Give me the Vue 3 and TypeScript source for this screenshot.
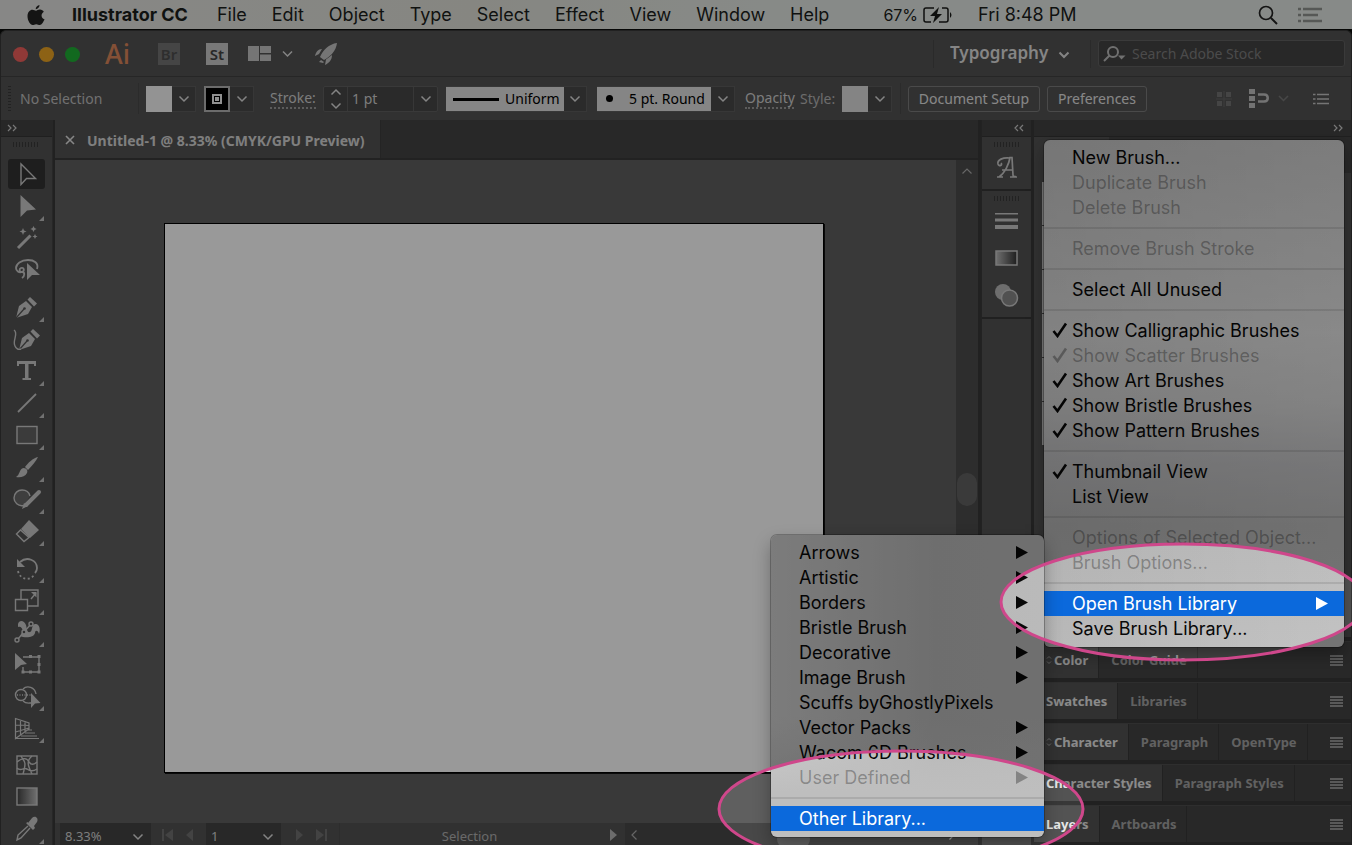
<script setup lang="ts">
import { ref } from 'vue'

interface MenuEntry {
  label?: string
  checked?: boolean
  disabled?: boolean
  arrow?: boolean
  active?: boolean
}

interface Tool {
  name: string
  svg: string
  flyout?: boolean
}

const appMenus = ['File', 'Edit', 'Object', 'Type', 'Select', 'Effect', 'View', 'Window', 'Help']

const brushMenu: MenuEntry[] = [
  { label: 'New Brush...' },
  { label: 'Duplicate Brush', disabled: true },
  { label: 'Delete Brush', disabled: true },
  {},
  { label: 'Remove Brush Stroke', disabled: true },
  {},
  { label: 'Select All Unused' },
  {},
  { label: 'Show Calligraphic Brushes', checked: true },
  { label: 'Show Scatter Brushes', checked: true, disabled: true },
  { label: 'Show Art Brushes', checked: true },
  { label: 'Show Bristle Brushes', checked: true },
  { label: 'Show Pattern Brushes', checked: true },
  {},
  { label: 'Thumbnail View', checked: true },
  { label: 'List View' },
  {},
  { label: 'Options of Selected Object...', disabled: true },
  { label: 'Brush Options...', disabled: true },
  {},
  { label: 'Open Brush Library', arrow: true, active: true },
  { label: 'Save Brush Library...' },
]

const libraryMenu: MenuEntry[] = [
  { label: 'Arrows', arrow: true },
  { label: 'Artistic', arrow: true },
  { label: 'Borders', arrow: true },
  { label: 'Bristle Brush', arrow: true },
  { label: 'Decorative', arrow: true },
  { label: 'Image Brush', arrow: true },
  { label: 'Scuffs byGhostlyPixels' },
  { label: 'Vector Packs', arrow: true },
  { label: 'Wacom 6D Brushes', arrow: true },
  { label: 'User Defined', arrow: true, disabled: true },
  {},
  { label: 'Other Library...', active: true },
]

const panels: { tabs: string[]; cycle?: boolean }[] = [
  { tabs: ['Color', 'Color Guide'], cycle: true },
  { tabs: ['Swatches', 'Libraries'] },
  { tabs: ['Character', 'Paragraph', 'OpenType'], cycle: true },
  { tabs: ['Character Styles', 'Paragraph Styles'] },
  { tabs: ['Layers', 'Artboards'] },
]

const nib = '<path class="f" d="M4 26 7 14 14 9 20 15 16 22ZM15.500 7.500 18 5 25 11.500 22 14.500Z"/><path class="cut" d="M4 26 12 17"/><circle class="bgf" cx="12.500" cy="16.500" r="1.300"/>'

const toolGroups: Tool[][] = [
  [
    { name: 'Selection', svg: '<path class="s" d="M9 5V25.500L14.500 19.500H23.500Z"/>' },
    { name: 'Direct Selection', flyout: true, svg: '<path class="f" d="M8.500 4V26L15 19.500 24 18.500Z"/>' },
    { name: 'Magic Wand', svg: '<path class="s w3" d="M6 25 18.500 12.500"/><path class="f" d="M11 5l1 2.500 2.500 1-2.500 1-1 2.500-1-2.500-2.500-1 2.500-1ZM21.500 3l1 2 2 1-2 1-1 2-1-2-2-1 2-1ZM23 11l.8 1.700 1.700.8-1.700.8-.8 1.700-.8-1.700-1.700-.8 1.700-.8Z"/>' },
    { name: 'Lasso', svg: '<path class="s w2" d="M25 14C27 8 22 5 16 5 9 5 4 9 4 13c0 3 3 5 6 4 3-1 2-5-1-4-2 1-2 4 1 4 3 0 3 4 0 6"/><path class="f" d="M15 8V25L20 20 28 20Z"/>' },
  ],
  [
    { name: 'Pen', flyout: true, svg: nib },
    { name: 'Curvature', svg: '<g transform="translate(3 0)">' + nib + '</g><path class="s" d="M2 6C7 9 0 17 3 22 4 25 7 26 9 25"/>' },
    { name: 'Type', flyout: true, svg: '<path class="f" d="M5 5H24V10H22V8H16.500V22H19V24H10.500V22H13V8H7V10H5Z"/>' },
    { name: 'Line Segment', flyout: true, svg: '<path class="s w2" d="M6 24 24 6"/>' },
    { name: 'Rectangle', flyout: true, svg: '<rect class="s" x="5" y="6.500" width="20" height="17" fill-opacity=".3" style="fill:#888"/>' },
    { name: 'Paintbrush', flyout: true, svg: '<path class="f" d="M26 5C21 6 16 11 13 15L16 18C20 14 24 9 26 5ZM11.500 16C15 16 16 19 15 21 13 25 8 26 4 25 8 23 7 17 11.500 16Z"/>' },
    { name: 'Shaper', flyout: true, svg: '<path class="s" d="M12 21.500C6 23 2 18 2 14 2 9 6 6 10 6 14 6 17 8 18 12" style="fill:#686868"/><path class="s w4" d="M14 21 27 8"/><path class="f" d="M10 25 12 19 16 22Z"/>' },
    { name: 'Eraser', flyout: true, svg: '<path class="f" d="M17 4 27 14 18 22 9 13Z"/><path class="s" d="M8.500 14 4.500 18 12 25.500 17 21.500Z"/>' },
  ],
  [
    { name: 'Rotate', flyout: true, svg: '<path class="s w2" d="M8 9C15 3 25 7 25 15 25 17 24 19 23 20"/><path class="f" d="M5 6V14H13Z"/><path class="s w2" stroke-dasharray="2 2.500" d="M6 18C8 27 18 28 22 22"/>' },
    { name: 'Scale', flyout: true, svg: '<path class="s" d="M9 14V5H26V21H16M3.500 14.500H15.500V25.500H3.500ZM19 14 24 8"/><path class="f" d="M19 7H24.500V12.500Z"/>' },
    { name: 'Width', flyout: true, svg: '<path class="f" d="M6 7C7 3 12 3 14 8 15 12 15 16 18 15 21 14 19 8 23 7 27 6 29 12 27 17 26 13 23 13 23 16 22 20 16 21 11 20L8 19 11 14C10 11 9 9 6 10Z"/><path class="s" d="M6 22 19 7"/><circle class="s bg" cx="5" cy="23" r="2"/><circle class="s bg" cx="12" cy="15" r="2"/><circle class="s bg" cx="19" cy="7" r="2"/>' },
    { name: 'Free Transform', svg: '<path class="f" d="M3 4V21L9 16 15 15Z"/><path class="s" d="M11 8H27V23H11V18"/><path class="f" d="M17 6h3v3h-3ZM25.500 6h3v3h-3ZM25.500 14h3v3h-3ZM25.500 21.500h3v3h-3ZM17 21.500h3v3h-3ZM9.500 21.500h3v3h-3Z"/>' },
    { name: 'Shape Builder', flyout: true, svg: '<circle class="s" cx="9" cy="14" r="5.500"/><path class="s" d="M11 8C15 4 23 6 24 13M11 20C14 23 17 22 19 22"/><path class="s" stroke-dasharray="1 1.500" d="M5 14H20"/><path class="f" d="M19 12V27L23 22.500 28.500 22Z"/>' },
    { name: 'Perspective Grid', flyout: true, svg: '<path class="s w1" d="M3.500 5.500V25.500L17 16V10ZM3.500 12 17 12.500M3.500 19 17 15M8.500 7V21.500M13 8V18.500M16 17H20M13 20H23M9 23H25M4 25.500H27"/>' },
  ],
  [
    { name: 'Mesh', svg: '<rect class="s" x="5" y="6" width="20" height="18"/><path class="s" d="M5 12C11 7 15 8 17 12 19 15 22 15 25 12M5 18C9 22 11 17 15 19 19 22 22 21 25 19M9 6C12 12 15 10 11 24M20 6C14 11 16 16 20 24"/>' },
    { name: 'Gradient', svg: '<rect class="s" x="5" y="6" width="20" height="17" style="fill:url(#tool-grad)"/>' },
    { name: 'Eyedropper', flyout: true, svg: '<path class="f" d="M16 9 20 4C23 1 27 4 25 8L22 12 23 14 21 16 14 9 16 8Z"/><path class="s" d="M16 12 6 21 5 26 9 24 18 14"/>' },
  ],
]

const strokeWeight = ref('1 pt')
const search = ref('')
const selectedTool = ref('Selection')
</script>

<template>
  <div class="screen">
    <header class="mac-bar">
      <svg class="apple" viewBox="0 0 18 22" aria-label="Apple"><path d="M12.500 1C12.600 3 10.800 5.300 8.700 5.200 8.500 3.200 10.500 1.200 12.500 1ZM9 6.700C10 6.700 11 5.500 13 5.600 14.700 5.700 16 6.500 16.800 7.700 13.500 9.800 14 14 17.500 15.300 16.700 17.600 14.800 21 12.800 21 11.500 21 10.800 20.200 9.200 20.200 7.600 20.200 6.900 21 5.700 21 3.200 21 .5 16.500.5 12.300.5 8 3 5.700 5.400 5.700 7 5.700 8 6.700 9 6.700Z" /></svg>
      <nav class="mac-menus" aria-label="Application menu">
        <button class="mac-item app-name" type="button">Illustrator CC</button>
        <button v-for="m in appMenus" :key="m" class="mac-item" type="button">{{ m }}</button>
      </nav>
      <div class="mac-status">
        <span class="battery-text">67%</span>
        <svg class="battery" viewBox="0 0 32 18"><path d="M12 2H4Q2 2 2 4V14Q2 16 4 16H9M20 2H24Q26 2 26 4V14Q26 16 24 16H17" fill="none" stroke="#181a18" stroke-width="1.500" /><path d="M17 1 8 10H13L11 17 20 8H15ZM28 6Q31 9 28 12Z" fill="#181a18" /></svg>
        <span class="clock">Fri 8:48 PM</span>
      </div>
      <button class="bare spot" type="button" aria-label="Spotlight"><svg viewBox="0 0 20 20"><circle cx="8" cy="8" r="6.500" fill="none" stroke="#222" stroke-width="1.700" /><path d="M13 13 19 19" stroke="#222" stroke-width="2" /></svg></button>
      <button class="bare notif" type="button" aria-label="Notifications"><svg viewBox="0 0 24 16"><path d="M0 2H3M0 8H3M0 14H3M5 2H24M5 8H20M5 14H24" stroke="#8f938f" stroke-width="2.400" /></svg></button>
    </header>

    <div class="window">
      <div class="title-bar">
        <div class="lights"><i class="red"></i><i class="yellow"></i><i class="green"></i></div>
        <span class="ai">Ai</span>
        <button class="badge br" type="button">Br</button>
        <button class="badge st" type="button">St</button>
        <button class="bare arrange" type="button" aria-label="Arrange documents"><svg viewBox="0 0 46 16"><path d="M0 0H11V15H0ZM12 0H23V7H12ZM12 8.500H23V15H12Z" fill="#c4c4c4" /><path d="M35 5.500 39.500 10 44 5.500" fill="none" stroke="#ddd" stroke-width="1.500" /></svg></button>
        <button class="bare rocket" type="button" aria-label="GPU performance"><svg viewBox="0 0 24 24"><path d="M23 1C15 2 9 8 6 15L10 18C17 14 22 9 23 1ZM8 7C4 7 2 10 1 14L5 12ZM18 13 12 17.500 11 23C15 21 18 18 18 13ZM7 18 10 20 9 21 5 20Z" fill="#c4c4c4" /></svg></button>
        <span class="spacer"></span>
        <div class="workspace">
          <select aria-label="Workspace"><option>Typography</option></select>
          <svg class="chev" viewBox="0 0 12 8"><path d="M1.500 1.500 6 6 10.500 1.500" /></svg>
        </div>
        <label class="search">
          <svg viewBox="0 0 24 18"><circle cx="11" cy="7" r="5" fill="none" stroke="#bbb" stroke-width="2" /><path d="M7.500 10.500 2 16" stroke="#bbb" stroke-width="2" /><path d="M16 10.500H23.500L19.500 14.500Z" fill="#bbb" /></svg>
          <input v-model="search" type="search" placeholder="Search Adobe Stock" aria-label="Search Adobe Stock" />
        </label>
      </div>

      <div class="control-bar">
        <i class="grip-v"></i>
        <span class="no-sel">No Selection</span>
        <i class="rule"></i>
        <button class="swatch fill-swatch" type="button" aria-label="Fill"><i class="chip"></i><svg class="chev" viewBox="0 0 12 8"><path d="M1.500 1.500 6 6 10.500 1.500" /></svg></button>
        <button class="swatch stroke-swatch" type="button" aria-label="Stroke color"><i class="chip ring"><b></b></i><svg class="chev" viewBox="0 0 12 8"><path d="M1.500 1.500 6 6 10.500 1.500" /></svg></button>
        <label class="dotted stroke-label" for="stroke-weight">Stroke:</label>
        <div class="weight">
          <button class="stepper" type="button" aria-label="Step weight"><svg viewBox="0 0 12 22"><path d="M1.500 6.500 6 2 10.500 6.500M1.500 15.500 6 20 10.500 15.500" /></svg></button>
          <input id="stroke-weight" v-model="strokeWeight" type="text" />
          <button class="drop" type="button" aria-label="Weight presets"><svg class="chev" viewBox="0 0 12 8"><path d="M1.500 1.500 6 6 10.500 1.500" /></svg></button>
        </div>
        <div class="combo profile">
          <i class="line-sample"></i>
          <select aria-label="Width profile"><option>Uniform</option></select>
          <svg class="chev" viewBox="0 0 12 8"><path d="M1.500 1.500 6 6 10.500 1.500" /></svg>
        </div>
        <div class="combo brush">
          <i class="dot-sample"></i>
          <select aria-label="Brush definition"><option>5 pt. Round</option></select>
          <svg class="chev" viewBox="0 0 12 8"><path d="M1.500 1.500 6 6 10.500 1.500" /></svg>
        </div>
        <a class="dotted opacity" href="#">Opacity</a>
        <span class="style-label">Style:</span>
        <button class="swatch" type="button" aria-label="Graphic style"><i class="chip style-chip"></i><svg class="chev" viewBox="0 0 12 8"><path d="M1.500 1.500 6 6 10.500 1.500" /></svg></button>
        <i class="rule"></i>
        <button class="outline-btn setup" type="button">Document Setup</button>
        <button class="outline-btn prefs" type="button">Preferences</button>
        <span class="spacer"></span>
        <svg class="c-ico snap" viewBox="0 0 16 16"><path d="M1 1H6V6H1ZM10 1H15V6H10ZM1 10H6V15H1ZM10 10H15V15H10Z" fill="#737373" /><path d="M8 0V16M0 8H16" stroke="#666" /></svg>
        <svg class="c-ico align" viewBox="0 0 40 20"><path d="M0 0H6V5H0ZM0 7H6V12H0ZM0 14H6V19H0Z" fill="#c0c0c0" /><path d="M9 5.500H15C20 5.500 20 12.500 15 12.500H9" fill="none" stroke="#c0c0c0" stroke-width="2.500" /><path d="M30 7 34.500 11.500 39 7" fill="none" stroke="#777" stroke-width="1.500" /></svg>
        <button class="bare c-list" type="button" aria-label="Control panel menu"><svg viewBox="0 0 16 12"><path d="M0 1.500H2.500M0 6H2.500M0 10.500H2.500M4 1.500H16M4 6H16M4 10.500H16" stroke="#c4c4c4" stroke-width="1.500" /></svg></button>
      </div>

      <div class="body">
        <aside class="tools" aria-label="Tools">
          <div class="dock-head left"><svg viewBox="0 0 10 8"><path d="M1 1 4 4 1 7M6 1 9 4 6 7" /></svg></div>
          <i class="grip-h"></i>
          <svg class="defs" width="0" height="0"><linearGradient id="tool-grad"><stop offset="0" stop-color="#444" /><stop offset="1" stop-color="#bbb" /></linearGradient><linearGradient id="dock-grad"><stop offset="0" stop-color="#bbb" /><stop offset="1" stop-color="#333" /></linearGradient></svg>
          <div v-for="(group, gi) in toolGroups" :key="gi" class="tool-group">
            <button
              v-for="t in group"
              :key="t.name"
              type="button"
              class="tool"
              :class="{ on: selectedTool === t.name, flyout: t.flyout }"
              :aria-label="t.name"
              @click="selectedTool = t.name"
            >
              <svg viewBox="0 0 30 30" v-html="t.svg"></svg>
            </button>
          </div>
        </aside>

        <main class="doc">
          <div class="doc-tabs">
            <div class="doc-tab">
              <button class="bare close" type="button" aria-label="Close"><svg viewBox="0 0 10 10"><path d="M1 1 9 9M9 1 1 9" stroke="#e0e0e0" stroke-width="1.600" /></svg></button>
              <span>Untitled-1 @ 8.33% (CMYK/GPU Preview)</span>
            </div>
          </div>
          <div class="work">
            <div class="canvas"><div class="artboard"></div></div>
            <div class="v-scroll"><svg viewBox="0 0 12 8"><path d="M1.500 6.500 6 2 10.500 6.500" /></svg><i class="thumb"></i></div>
          </div>
          <footer class="status">
            <div class="mini zoom">
              <select aria-label="Zoom"><option>8.33%</option></select>
              <svg class="chev" viewBox="0 0 12 8"><path d="M1.500 1.500 6 6 10.500 1.500" /></svg>
            </div>
            <svg class="nav-ico prev" viewBox="0 0 32 12"><path d="M0 0H2V12H0ZM11 0V12L3 6ZM31 0V12L24 6Z" /></svg>
            <div class="mini page">
              <select aria-label="Artboard"><option>1</option></select>
              <svg class="chev" viewBox="0 0 12 8"><path d="M1.500 1.500 6 6 10.500 1.500" /></svg>
            </div>
            <svg class="nav-ico next" viewBox="0 0 32 12"><path d="M1 0V12L8 6ZM21 0V12L29 6ZM30 0H32V12H30Z" /></svg>
            <span class="tool-name">Selection</span>
            <svg class="play" viewBox="0 0 8 12"><path d="M0 0V12L7 6Z" fill="#b4b4b4" /></svg>
            <div class="h-scroll"><svg viewBox="0 0 8 12"><path d="M6.500 1.500 2 6 6.500 10.500" /></svg><i class="thumb"></i><svg viewBox="0 0 8 12"><path d="M1.500 1.500 6 6 1.500 10.500" /></svg></div>
          </footer>
        </main>

        <aside class="dock" aria-label="Collapsed panels">
          <div class="dock-head right"><svg viewBox="0 0 10 8"><path d="M4 1 1 4 4 7M9 1 6 4 9 7" /></svg></div>
          <div class="dock-group one">
            <i class="grip-h"></i>
            <button class="bare" type="button" aria-label="Glyphs"><svg viewBox="0 0 24 24"><path d="M8 22H2M4 22C10 18 14 9 15 2.500H17L18 20Q18 22 21 21.500M7 15H18M15 22H22M15 3C8 2 2 5 3 9 4 12 8 10 6 8" fill="none" stroke="#c8c8c8" stroke-width="1.700" /></svg></button>
          </div>
          <div class="dock-group two">
            <i class="grip-h"></i>
            <button class="bare" type="button" aria-label="Stroke"><svg viewBox="0 0 24 24"><path d="M0 4H23V5.500H0ZM0 9.500H23V12.500H0ZM0 16H23V20H0Z" fill="#c8c8c8" /></svg></button>
            <button class="bare" type="button" aria-label="Gradient"><svg viewBox="0 0 24 24"><rect x="1" y="5" width="21" height="14" fill="url(#dock-grad)" stroke="#c8c8c8" stroke-width="1.500" /></svg></button>
            <button class="bare" type="button" aria-label="Transparency"><svg viewBox="0 0 24 24"><circle cx="8" cy="9" r="8" fill="#b8b8b8" /><circle cx="14.500" cy="15" r="8" fill="#888" stroke="#c8c8c8" stroke-width="1.500" /></svg></button>
          </div>
        </aside>

        <aside class="panels" aria-label="Panels">
          <div class="dock-head end"><svg viewBox="0 0 10 8"><path d="M1 1 4 4 1 7M6 1 9 4 6 7" /></svg></div>
          <div class="brushes"><div class="brush-tabs"><i></i></div><div class="brush-list"><i v-for="n in 6" :key="n"></i></div></div>
          <div v-for="p in panels" :key="p.tabs[0]" class="panel-row" role="tablist">
            <button v-for="(t, i) in p.tabs" :key="t" class="p-tab" :class="{ current: i === 0 }" type="button" role="tab" :aria-selected="i === 0">
              <svg v-if="p.cycle && i === 0" class="cycle" viewBox="0 0 6 10"><path d="M1 3.500 3 1.500 5 3.500M1 6.500 3 8.500 5 6.500" /></svg>{{ t }}
            </button>
            <span class="spacer"></span>
            <button class="bare burger" type="button" :aria-label="p.tabs[0] + ' menu'"><svg viewBox="0 0 13 11"><path d="M0 1H13M0 4H13M0 7H13M0 10H13" stroke="#b0b0b0" stroke-width="1.400" /></svg></button>
          </div>
        </aside>
      </div>
    </div>

    <div class="popup main-popup" role="menu" aria-label="Brushes panel menu">
      <template v-for="(e, i) in brushMenu" :key="i">
        <hr v-if="!e.label" />
        <button v-else type="button" role="menuitem" :disabled="e.disabled" :class="{ active: e.active }">
          <svg v-if="e.checked" class="tick" viewBox="0 0 16 16"><path d="M1.500 9 5.500 14 14 1.500" fill="none" stroke="currentColor" stroke-width="2.600" /></svg>
          {{ e.label }}
          <svg v-if="e.arrow" class="arrow" viewBox="0 0 12 13"><path d="M0 0 12 6.500 0 13Z" fill="currentColor" /></svg>
        </button>
      </template>
    </div>

    <div class="popup sub-popup" role="menu" aria-label="Open Brush Library">
      <template v-for="(e, i) in libraryMenu" :key="i">
        <hr v-if="!e.label" />
        <button v-else type="button" role="menuitem" :disabled="e.disabled" :class="{ active: e.active }">
          {{ e.label }}
          <svg v-if="e.arrow" class="arrow" viewBox="0 0 12 13"><path d="M0 0 12 6.500 0 13Z" fill="currentColor" /></svg>
        </button>
      </template>
    </div>

    <svg class="spotlight" aria-hidden="true">
      <mask id="holes">
        <rect width="100%" height="100%" fill="#fff" />
        <svg x="100%" overflow="visible"><ellipse cx="-169" cy="602" rx="182" ry="58" fill="#000" /><ellipse cx="-451" cy="809" rx="182" ry="58" fill="#000" /></svg>
      </mask>
      <rect width="100%" height="100%" fill="#000" fill-opacity=".4" mask="url(#holes)" />
      <svg x="100%" overflow="visible" fill="none" stroke="#cf478b" stroke-width="3"><ellipse cx="-169" cy="602" rx="182" ry="58" /><ellipse cx="-451" cy="809" rx="182" ry="58" /></svg>
    </svg>
  </div>
</template>

<style>
body { background: #000; overflow: hidden; }
</style>

<style scoped>
.screen { position: relative; display: flex; flex-direction: column; height: 100vh; overflow: hidden; background: #0a0c0a; font-family: "Noto Sans", "Open Sans", sans-serif; font-size: 14px; color: #ddd; }
.screen *, .screen *::before, .screen *::after { box-sizing: border-box; }
button, input, select { font: inherit; color: inherit; margin: 0; padding: 0; border: 0; background: none; border-radius: 0; appearance: none; outline: 0; }
svg { display: block; flex: none; }
i { display: block; flex: none; }
.bare { display: block; }
.spacer { flex: 1; }
.chev { width: 12px; height: 8px; fill: none; stroke: #ddd; stroke-width: 1.5; }

/* system menu bar */
.mac-bar { display: flex; align-items: center; flex: none; height: 29px; padding: 0 30px 0 27px; background: linear-gradient(90deg, #e2e2e0, #dfe0d8 35%, #e2e7e3 60%, #e2e7e3); color: #1c1e1c; font-family: Inter, "Liberation Sans", sans-serif; font-size: 18px; }
.apple { width: 18px; height: 22px; fill: #222; }
.mac-menus { display: flex; gap: 25px; margin-left: 27px; }
.app-name { margin-right: 4px; font-weight: 700; }
.mac-status { display: flex; align-items: center; margin-left: 54px; }
.battery-text { font-size: 16px; }
.battery { width: 32px; height: 18px; margin-left: 4px; }
.clock { margin-left: 24px; }
.spot { margin-left: auto; }
.spot svg { width: 20px; height: 20px; }
.notif { margin-left: 20px; }
.notif svg { width: 24px; height: 16px; }

/* application window */
.window { display: flex; flex-direction: column; flex: 1; min-height: 0; margin-top: 1px; border: 1px solid #383838; border-bottom: 0; border-radius: 6px 6px 0 0; background: #535353; overflow: hidden; }
.title-bar { display: flex; align-items: center; flex: none; height: 46px; padding: 0 6px 0 12px; border-bottom: 1px solid #404040; }
.lights { display: flex; gap: 11px; margin-top: 2px; }
.lights i { width: 15px; height: 15px; border-radius: 50%; }
.red { background: #f0605c; }
.yellow { background: #eba423; }
.green { background: #1fb034; }
.ai { width: 53px; margin-left: 25px; color: #dd865a; font-size: 27px; font-weight: 500; line-height: 30px; }
.badge { width: 22px; height: 22px; font-size: 15px; line-height: 22px; font-weight: 600; text-align: center; }
.br { background: #747474; color: #4d4d4d; }
.st { margin-left: 26px; background: #c8c8c8; color: #444; }
.arrange { margin-left: 20px; }
.arrange svg { width: 46px; height: 16px; }
.rocket { margin-left: 20px; }
.rocket svg { width: 24px; height: 24px; }
.workspace { position: relative; height: 28px; width: 158px; border-left: 1px solid #474747; border-right: 1px solid #474747; color: #dedede; }
.workspace select { width: 100%; height: 26px; padding-left: 16px; font-size: 17px; font-weight: 600; }
.workspace .chev { position: absolute; right: 20px; top: 11px; stroke-width: 2; }
.search { display: flex; align-items: center; width: 247px; height: 27px; margin-left: 7px; padding-left: 3px; border: 1px solid #626262; border-radius: 3px; background: #434343; }
.search svg { width: 24px; height: 18px; }
.search input { flex: 1; min-width: 0; margin-left: 6px; font-size: 14px; }
.search input::placeholder { color: #7e7e7e; opacity: 1; }

.control-bar { display: flex; align-items: center; flex: none; height: 43px; padding: 0 22px 0 7px; color: #cfcfcf; }
.grip-v { width: 3px; height: 26px; background: repeating-linear-gradient(#3a3a3a 0 1px, transparent 1px 3px); }
.no-sel { width: 118px; margin-left: 9px; color: #bcbcbc; }
.rule { width: 1px; height: 31px; background: #494949; }
.swatch { display: flex; align-items: center; width: 50px; height: 26px; background: #484848; border: 1px solid #5c5c5c; }
.swatch .chev { margin: auto; }
.chip { width: 26px; height: 26px; margin-left: -1px; background: #f5f5f5; }
.style-chip { background: #dcdcdc; }
.fill-swatch { margin-left: 7px; }
.stroke-swatch { margin-left: 8px; }
.ring { display: grid; place-items: center; border: 2px solid #b5b5b5; background: #000; }
.ring b { width: 10px; height: 10px; border: 2px solid #f0f0f0; background: #f0f0f0; box-shadow: inset 0 0 0 1px #000; }
.dotted { color: #cfcfcf; text-decoration: none; line-height: 18px; border-bottom: 2px dotted #999; }
.stroke-label { width: 46px; margin-left: 16px; }
.weight { display: flex; width: 115px; height: 26px; margin-left: 7px; border: 1px solid #606060; border-radius: 2px; background: #464646; }
.stepper { width: 24px; border-right: 1px solid #5c5c5c; }
.stepper svg { width: 12px; height: 22px; margin: auto; fill: none; stroke: #ddd; stroke-width: 1.5; }
.weight input { flex: 1; min-width: 0; padding-left: 4px; }
.drop { width: 24px; border-left: 1px solid #5c5c5c; }
.drop .chev { margin: auto; }
.combo { position: relative; height: 26px; color: #000; }
.combo select { width: 100%; height: 26px; border: 1px solid #5c5c5c; border-left: 0; }
.combo .chev { position: absolute; right: 6px; top: 9px; }
.profile { width: 141px; margin-left: 8px; background: linear-gradient(90deg, #dedede 118px, #484848 118px); }
.profile select { padding-left: 59px; }
.line-sample { position: absolute; left: 7px; top: 12px; width: 46px; height: 3px; background: #000; }
.brush { width: 138px; margin-left: 10px; background: linear-gradient(90deg, #dedede 114px, #484848 114px); }
.brush select { padding-left: 32px; }
.dot-sample { position: absolute; left: 9px; top: 9px; width: 7px; height: 7px; border-radius: 50%; background: #000; }
.opacity { width: 49px; margin-left: 10px; }
.style-label { width: 42px; margin-left: 6px; color: #b4b4b4; }
.swatch + .rule { margin-left: 8px; }
.outline-btn { height: 26px; border: 1px solid #7c7c7c; border-radius: 3px; color: #e2e2e2; text-align: center; }
.setup { width: 132px; margin-left: 7px; }
.prefs { width: 100px; margin-left: 7px; }
.snap { width: 16px; height: 16px; margin-right: 17px; }
.align { width: 40px; height: 20px; margin-right: 24px; }
.c-list svg { width: 16px; height: 12px; }

.body { display: flex; flex: 1; min-height: 0; background: #383838; }
.dock-head { flex: none; display: flex; align-items: center; height: 17px; background: #424242; border-bottom: 1px solid #353535; }
.dock-head svg { width: 10px; height: 8px; fill: none; stroke: #c8c8c8; stroke-width: 1.2; }
.left { padding-left: 6px; }
.right { justify-content: flex-end; padding-right: 7px; }
.end { justify-content: flex-end; padding-right: 8px; }
.grip-h { width: 26px; height: 5px; background: repeating-linear-gradient(90deg, #3a3a3a 0 1px, transparent 1px 3px); }

.tools { display: flex; flex-direction: column; flex: none; width: 52px; background: #535353; border-right: 1px solid #414141; }
.tools > .grip-h { margin: 5px 0 12px 12px; }
.defs { position: absolute; }
.tool-group { display: flex; flex-direction: column; flex: none; gap: 2px; width: 38px; margin: 0 0 7px 7px; }
.tool { position: relative; display: grid; place-items: center; width: 37px; height: 30px; border-radius: 3px; }
.tool.on { background: #323232; }
.tool svg { width: 30px; height: 30px; overflow: visible; }
.tool.flyout::after { content: ""; position: absolute; right: 1px; bottom: 0; border-left: 5px solid transparent; border-bottom: 5px solid #bdbdbd; }
.tool :deep(.s) { fill: none; stroke: #c8c8c8; stroke-width: 1.4; }
.tool :deep(.f) { fill: #c8c8c8; }
.tool :deep(.w1) { stroke-width: 1.2; }
.tool :deep(.w2) { stroke-width: 1.8; }
.tool :deep(.w3) { stroke-width: 3; }
.tool :deep(.w4) { stroke-width: 4; stroke-linecap: round; }
.tool :deep(.cut) { stroke: #535353; stroke-width: 1.2; }
.tool :deep(.bgf), .tool :deep(.bg) { fill: #535353; }

.doc { display: flex; flex-direction: column; flex: 1; min-width: 0; margin-left: 2px; background: #5f5f5f; }
.doc-tabs { display: flex; flex: none; height: 40px; background: #444; border-bottom: 2px solid #3a3a3a; }
.doc-tab { display: flex; align-items: center; padding: 2px 15px 0 10px; background: #535353; border-right: 1px solid #3c3c3c; font-weight: 700; font-size: 14px; color: #d4d4d4; }
.close { margin-right: 12px; }
.close svg { width: 10px; height: 10px; }
.work { display: flex; flex: 1; min-height: 0; }
.canvas { display: flex; flex: 1; padding: 63px 132px 50px 109px; }
.artboard { flex: 1; background: #fff; border: 1px solid #000; box-shadow: 1px 1px 0 #111; }
.v-scroll { display: flex; flex-direction: column; justify-content: space-between; align-items: center; width: 22px; padding: 7px 0 317px; background: #4b4b4b; }
.v-scroll svg, .h-scroll svg { width: 12px; height: 8px; fill: none; stroke: #aaa; stroke-width: 1.2; }
.v-scroll .thumb { width: 20px; height: 33px; border-radius: 10px; background: #626262; }
.status { display: flex; align-items: flex-start; flex: none; height: 22px; padding-left: 5px; background: #535353; font-size: 13px; color: #d0d0d0; }
.status > svg { margin-top: 6px; }
.mini { position: relative; height: 22px; background: #434343; }
.mini select { width: 100%; height: 22px; padding: 3px 0 0 5px; }
.mini .chev { position: absolute; right: 7px; top: 10px; }
.zoom { width: 91px; }
.page { width: 75px; margin-left: 12px; }
.nav-ico { width: 32px; height: 12px; fill: #707070; }
.prev { margin-left: 11px; }
.next { margin-left: 14px; }
.tool-name { width: 260px; height: 22px; margin-left: 12px; padding-top: 4px; border-left: 1px solid #4b4b4b; line-height: 18px; text-align: center; color: #b0b0b0; }
.play { width: 8px; height: 12px; margin-left: 11px; }
.h-scroll { display: flex; flex: 1; justify-content: space-between; align-items: flex-start; height: 22px; margin-left: 7px; padding: 6px 22px 0 5px; background: #484848; }
.h-scroll svg { width: 8px; height: 12px; }
.h-scroll .thumb { width: 33px; height: 20px; border-radius: 10px; background: #626262; }

.dock { flex: none; width: 50px; margin-left: 3px; background: #535353; border-left: 1px solid #3a3a3a; }
.dock-group { display: flex; flex-direction: column; align-items: center; padding-top: 5px; border-bottom: 2px solid #363636; }
.dock-group svg { width: 24px; height: 24px; }
.one { height: 54px; }
.one button { margin-top: 8px; }
.two { height: 128px; gap: 13px; }
.two .grip-h { margin-bottom: -5px; }

.panels { display: flex; flex-direction: column; flex: none; width: 317px; margin-left: 3px; padding-bottom: 3px; background: #383838; }
.brushes { flex: 1; display: flex; flex-direction: column; min-height: 0; background: #535353; }
.brush-tabs { height: 36px; background: #444; }
.brush-tabs i { width: 75px; height: 36px; background: #535353; }
.brush-list { width: 296px; margin: 9px 0 0 8px; }
.brush-list i { height: 43px; margin-bottom: 1px; background: #c8c8c8; }
.panel-row { display: flex; flex: none; height: 37px; margin-top: 4px; background: #444; border-top: 1px solid #4e4e4e; }
.p-tab { display: flex; align-items: center; padding: 0 10px 0 12px; border-right: 1px solid #383838; color: #a2a2a2; font-size: 13px; font-weight: 700; white-space: nowrap; }
.p-tab.current { background: #535353; color: #e6e6e6; }
.cycle { width: 6px; height: 10px; margin-right: 2px; fill: none; stroke: #aaa; }
.burger { margin-right: 8px; }
.burger svg { width: 13px; height: 11px; }

/* pop-up menus */
.popup { position: absolute; padding: 5px 0 6px; border-radius: 6px; color: #080808; font-family: Inter, "Liberation Sans", sans-serif; font-size: 18px; box-shadow: 0 0 0 1px rgba(0, 0, 0, .25), 0 8px 18px rgba(0, 0, 0, .3); }
.main-popup { right: 8px; top: 140px; width: 300px; background: linear-gradient(90deg, rgba(0, 0, 0, .05), transparent), linear-gradient(#cfcfcf, #e4e4e4 38%, #dadada 52%, #c6c6c8 64%, #bcbcbc 76%, #c2c2c2); }
.sub-popup { right: 308px; top: 535px; width: 273px; background: linear-gradient(transparent 60%, #bebebe 85%), linear-gradient(90deg, #cfcfcf, #b8b8b8 60%, #bababa); }
.popup button { position: relative; display: block; width: 100%; height: 25px; padding-left: 28px; line-height: 25px; text-align: left; white-space: nowrap; }
.popup button:disabled { color: rgba(0, 0, 0, .3); }
.popup button.active { background: #0b69dc; color: #fff; }
.popup hr { height: 16px; margin: 0; border: 0; background: linear-gradient(transparent 7px, rgba(0, 0, 0, .1) 7px 9px, transparent 9px); }
.tick { position: absolute; left: 8px; top: 4px; width: 16px; height: 16px; }
.arrow { position: absolute; right: 16px; top: 6px; width: 12px; height: 13px; }

.spotlight { position: absolute; inset: 0; width: 100%; height: 100%; pointer-events: none; }
</style>
